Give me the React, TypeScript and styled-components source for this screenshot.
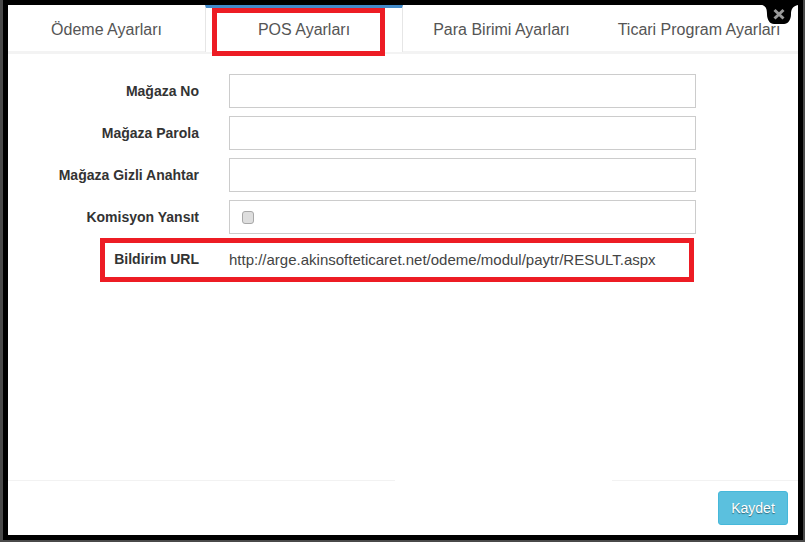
import styled, { createGlobalStyle } from "styled-components";

const GlobalStyle = createGlobalStyle`
  html, body {
    margin: 0;
    padding: 0;
    background: #4a4a4a;
  }
  * {
    box-sizing: border-box;
  }
`;

const Backdrop = styled.div`
  width: 805px;
  height: 542px;
  padding: 0 2px 2px 3px;
  background: #4a4a4a;
`;

const Modal = styled.div`
  position: relative;
  width: 800px;
  height: 540px;
  border: 5px solid #000;
  background: #fff;
  display: flex;
  flex-direction: column;
  font-family: "Liberation Sans", Arial, sans-serif;
  color: #333;
`;

const CloseButton = styled.div`
  position: absolute;
  top: 0;
  right: 0;
  width: 36px;
  height: 19px;
`;

const Tabs = styled.div`
  position: relative;
  height: 49px;
  display: flex;
  border-bottom: 3px solid #f3f3f3;
`;

const Tab = styled.div<{ $width: number; $active?: boolean }>`
  width: ${(p) => p.$width}px;
  height: ${(p) => (p.$active ? 47 : 46)}px;
  display: flex;
  align-items: center;
  justify-content: center;
  font-size: 16px;
  color: #555;
  white-space: nowrap;
  background: #fff;
  border-top: 3px solid ${(p) => (p.$active ? "#428bca" : "transparent")};
  border-left: 1px solid ${(p) => (p.$active ? "#e6e6e6" : "transparent")};
  border-right: 1px solid ${(p) => (p.$active ? "#e6e6e6" : "transparent")};
`;

const RedBox = styled.div`
  position: absolute;
  border: 5px solid #ed1c24;
  pointer-events: none;
`;

const TabHighlight = styled(RedBox)`
  left: 204px;
  top: 3px;
  width: 173px;
  height: 48px;
`;

const Form = styled.div`
  flex: 1;
  display: flex;
  flex-direction: column;
  gap: 8px;
  padding-top: 20px;
`;

const Row = styled.div`
  display: flex;
  align-items: center;
  height: 34px;
`;

const Label = styled.label`
  width: 191px;
  text-align: right;
  font-size: 14px;
  font-weight: 700;
  color: #333;
  white-space: nowrap;
`;

const Field = styled.div`
  margin-left: 30px;
  width: 467px;
  height: 34px;
  border: 1px solid #ccc;
  background: #fff;
  display: flex;
  align-items: center;
`;

const Check = styled.input`
  appearance: none;
  margin: 0 0 0 12px;
  width: 12px;
  height: 13px;
  border: 1px solid #a8a8a8;
  border-radius: 3px;
  background: #dedede;
`;

const UrlRow = styled(Row)`
  position: relative;
`;

const UrlText = styled.span`
  margin-left: 30px;
  font-size: 15px;
  color: #444;
  white-space: nowrap;
`;

const UrlHighlight = styled(RedBox)`
  left: 92px;
  top: -4px;
  width: 594px;
  height: 44px;
`;

const Footer = styled.div`
  height: 55px;
  display: flex;
  flex-direction: column;
`;

const Rule = styled.div`
  display: flex;
  justify-content: space-between;
  height: 1px;
`;

const RuleSegment = styled.div<{ $width: number }>`
  width: ${(p) => p.$width}px;
  background: #f2f2f2;
`;

const Actions = styled.div`
  display: flex;
  justify-content: flex-end;
  padding: 10px 10px 0 0;
`;

const SaveButton = styled.button`
  width: 70px;
  height: 34px;
  border: 1px solid #46b8da;
  border-radius: 3px;
  background: #5bc0de;
  color: #fff;
  font-family: inherit;
  font-size: 14px;
  padding: 0;
  text-shadow: 0 1px 1px rgba(0, 0, 0, 0.45);
`;

const tabs = [
  { title: "Ödeme Ayarları", width: 197 },
  { title: "POS Ayarları", width: 198, active: true },
  { title: "Para Birimi Ayarları", width: 197 },
  { title: "Ticari Program Ayarları", width: 198 },
];

const fields = ["Mağaza No", "Mağaza Parola", "Mağaza Gizli Anahtar"];

export default function App() {
  return (
    <Backdrop>
      <GlobalStyle />
      <Modal>
        <Tabs>
          {tabs.map((tab) => (
            <Tab key={tab.title} $width={tab.width} $active={tab.active}>
              {tab.title}
            </Tab>
          ))}
          <TabHighlight />
        </Tabs>
        <Form>
          {fields.map((name) => (
            <Row key={name}>
              <Label>{name}</Label>
              <Field />
            </Row>
          ))}
          <Row>
            <Label>Komisyon Yansıt</Label>
            <Field>
              <Check type="checkbox" />
            </Field>
          </Row>
          <UrlRow>
            <Label>Bildirim URL</Label>
            <UrlText>http://arge.akinsofteticaret.net/odeme/modul/paytr/RESULT.aspx</UrlText>
            <UrlHighlight />
          </UrlRow>
        </Form>
        <Footer>
          <Rule>
            <RuleSegment $width={387} />
            <RuleSegment $width={186} />
          </Rule>
          <Actions>
            <SaveButton>Kaydet</SaveButton>
          </Actions>
        </Footer>
        <CloseButton>
          <svg width="36" height="19" viewBox="0 0 36 19">
            <path d="M0 0 H36 C31 1 29 4 29 9 C29 15 26 19 22 19 H12 C8 19 5 15 5 9 C5 4 4 1 0 0 Z" fill="#000" />
            <path d="M12.5 5 L21.5 13.5 M21.5 5 L12.5 13.5" stroke="#9a9a9a" strokeWidth="3" />
          </svg>
        </CloseButton>
      </Modal>
    </Backdrop>
  );
}
